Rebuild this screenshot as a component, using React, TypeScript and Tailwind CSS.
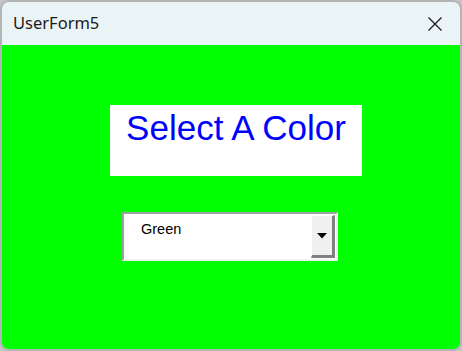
import React from "react";

export default function App() {
  return (
    <div className="w-[462px] h-[351px] bg-[#c4c4c4] overflow-hidden">
      <div className="w-[462px] h-[351px] rounded-[9px] border-2 border-[#b4b4b4] overflow-hidden flex flex-col">
        <div className="h-[43px] bg-[#eaf4f7] flex items-center justify-between pl-[11px] pr-[17px] shrink-0">
          <span className="text-[16.5px] text-[#1a1a1a] leading-none" style={{ fontFamily: '"Noto Sans", "Open Sans", sans-serif' }}>
            UserForm5
          </span>
          <svg width="16" height="16" viewBox="0 0 16 16" className="mt-[1px]">
            <path d="M1.5 1.5 L14.5 14.5 M14.5 1.5 L1.5 14.5" stroke="#1a1a1a" strokeWidth="1.3" fill="none" />
          </svg>
        </div>
        <div className="flex-1 bg-[#00ff00] flex flex-col">
          <div className="ml-[108px] mt-[60px] w-[252px] h-[71px] bg-white text-center pt-[3px]">
            <span className="text-[35px] text-[#0000ff] leading-[1.15]" style={{ fontFamily: '"Liberation Sans", Arial, sans-serif' }}>
              Select A Color
            </span>
          </div>
          <div className="ml-[120px] mt-[36px] w-[216px] h-[49px] border-t-2 border-l-2 border-t-[#a0a0a0] border-l-[#a0a0a0] border-r-2 border-b-2 border-r-[#f0f0f0] border-b-[#f0f0f0] bg-white flex">
            <div className="flex-1 pl-[17px] pt-[2px]">
              <span className="text-[14.5px] text-black leading-[1.15]" style={{ fontFamily: '"Liberation Sans", Arial, sans-serif' }}>
                Green
              </span>
            </div>
            <div className="w-[24px] my-[1px] mr-[1px] bg-[#f0f0f0] border-l border-t border-l-white border-t-white border-r-[3px] border-b-[3px] border-r-[#808080] border-b-[#808080] flex items-center justify-center">
              <svg width="10" height="6" viewBox="0 0 10 6">
                <path d="M0 0 L10 0 L5 5.5 Z" fill="#000" />
              </svg>
            </div>
          </div>
        </div>
      </div>
    </div>
  );
}
